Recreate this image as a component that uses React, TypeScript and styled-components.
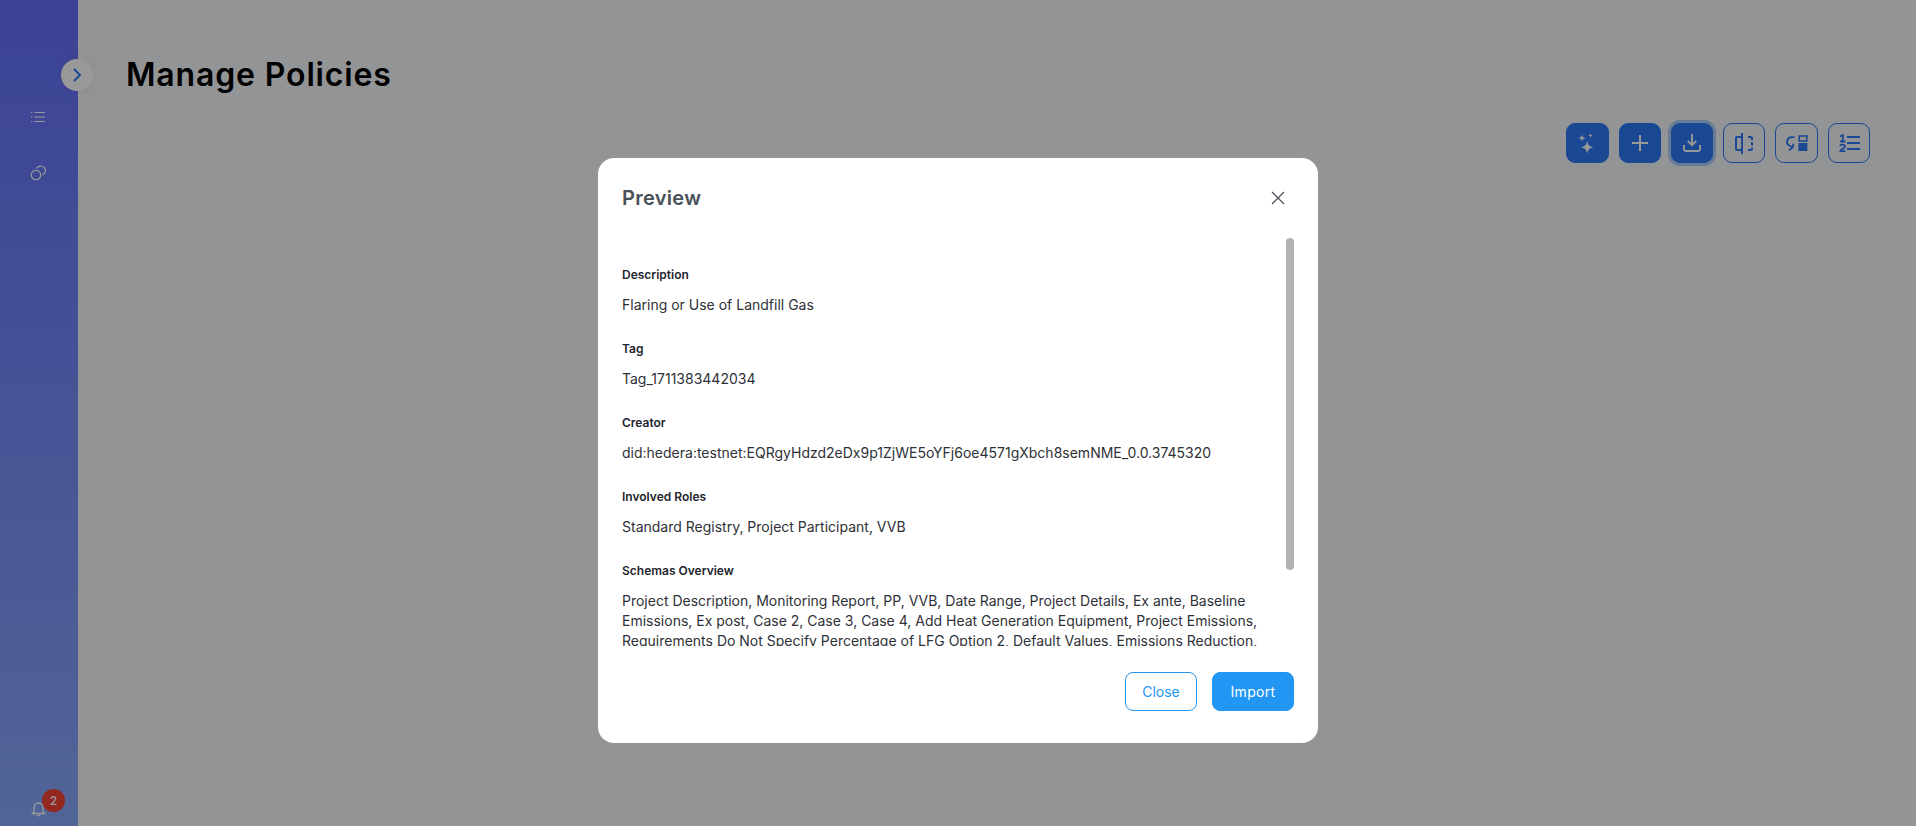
import React from "react";
import styled, { createGlobalStyle } from "styled-components";

const GlobalStyle = createGlobalStyle`
  html, body {
    margin: 0;
    padding: 0;
    height: 100%;
    overflow: hidden;
  }
  body {
    font-family: Inter, "Liberation Sans", sans-serif;
    background: #fff;
  }
`;

const Page = styled.div`
  position: relative;
  display: flex;
  width: 100%;
  height: 826px;
  overflow: hidden;
  background: #f6f7f9;
`;

const Sidebar = styled.nav`
  position: relative;
  display: flex;
  flex-direction: column;
  align-items: center;
  flex: 0 0 78px;
  padding: 106px 0 0;
  box-sizing: border-box;
  background: linear-gradient(180deg, #646ffb 0%, #88a8fb 100%);
  color: #fff;
`;

const NavItem = styled.div`
  display: flex;
  width: 100%;
  height: 22px;
  margin-bottom: 34px;
  align-items: center;
  justify-content: center;
  margin-left: -2px;
`;

const Bell = styled.div`
  position: absolute;
  left: 31px;
  bottom: 9px;
  width: 15px;
  height: 16px;
`;

const Badge = styled.span`
  position: absolute;
  left: 11px;
  top: -12px;
  width: 23px;
  height: 23px;
  border-radius: 50%;
  background: #f44336;
  color: #fff;
  font-size: 12px;
  font-weight: 500;
  line-height: 23px;
  text-align: center;
`;

const Toggle = styled.div`
  position: absolute;
  z-index: 2;
  left: 61px;
  top: 59px;
  display: flex;
  width: 32px;
  height: 32px;
  align-items: center;
  justify-content: center;
  border-radius: 50%;
  background: #fff;
  box-shadow: 0 0 14px rgba(0, 0, 0, 0.06);
`;

const Main = styled.main`
  flex: 1;
  padding: 53px 46px 0 48px;
`;

const Title = styled.h1`
  margin: 0;
  font-size: 32px;
  line-height: 44px;
  font-weight: 600;
  color: #000;
  letter-spacing: 0.85px;
`;

const Toolbar = styled.div`
  display: flex;
  justify-content: flex-end;
  gap: 10px;
  margin-top: 26px;
`;

const ToolButton = styled.button<{ $filled?: boolean; $focused?: boolean; $wide?: boolean }>`
  display: flex;
  width: ${(p) => (p.$wide ? "43px" : "42px")};
  height: 40px;
  padding: 0;
  align-items: center;
  justify-content: center;
  box-sizing: border-box;
  border-radius: 9px;
  border: 1px solid #2c78f6;
  background: ${(p) => (p.$filled ? "#2c78f6" : "transparent")};
  color: ${(p) => (p.$filled ? "#fff" : "#2c78f6")};
  box-shadow: ${(p) => (p.$focused ? "0 0 0 3px #acccfb" : "none")};
`;

const Overlay = styled.div`
  position: absolute;
  z-index: 5;
  inset: 0;
  display: flex;
  justify-content: center;
  align-items: flex-start;
  background: rgba(0, 0, 0, 0.4);
`;

const Modal = styled.div`
  display: flex;
  flex-direction: column;
  width: 720px;
  height: 585px;
  margin-top: 158px;
  box-sizing: border-box;
  border-radius: 16px;
  background: #fff;
`;

const ModalHeader = styled.header`
  display: flex;
  flex: 0 0 auto;
  align-items: center;
  justify-content: space-between;
  height: 80px;
  padding: 0 33px 0 24px;
`;

const ModalTitle = styled.h2`
  margin: 0;
  font-size: 20px;
  font-weight: 600;
  letter-spacing: 0.3px;
  color: #495057;
`;

const CloseIcon = styled.div`
  display: flex;
  color: #495057;
`;

const ModalBody = styled.div`
  position: relative;
  flex: 0 0 408px;
  overflow: hidden;
  padding: 3px 60px 0 24px;
  box-sizing: border-box;
`;

const Scrollbar = styled.div`
  position: absolute;
  top: 0;
  right: 24px;
  width: 8px;
  height: 332px;
  border-radius: 4px;
  background: #b2b2b2;
`;

const Field = styled.section`
  padding-top: 26px;
`;

const Label = styled.div`
  font-size: 12px;
  line-height: 16px;
  font-weight: 600;
  color: #23252e;
  margin-bottom: 12px;
`;

const Value = styled.div`
  font-size: 14px;
  line-height: 20px;
  color: #2f3138;
`;

const ModalFooter = styled.footer`
  display: flex;
  justify-content: flex-end;
  gap: 15px;
  padding: 26px 24px 0;
`;

const FooterButton = styled.button<{ $primary?: boolean }>`
  height: 39px;
  width: ${(p) => (p.$primary ? "82px" : "72px")};
  padding: 0;
  box-sizing: border-box;
  border: 1px solid #2196f3;
  border-radius: 8px;
  font-family: Inter, "Liberation Sans", sans-serif;
  font-size: 14px;
  font-weight: 400;
  letter-spacing: ${(p) => (p.$primary ? "0.3px" : "0")};
  background: ${(p) => (p.$primary ? "#2196f3" : "#fff")};
  color: ${(p) => (p.$primary ? "#fff" : "#2196f3")};
`;

const fields = [
  { label: "Description", value: "Flaring or Use of Landfill Gas" },
  { label: "Tag", value: "Tag_1711383442034" },
  {
    label: "Creator",
    value: "did:hedera:testnet:EQRgyHdzd2eDx9p1ZjWE5oYFj6oe4571gXbch8semNME_0.0.3745320",
  },
  { label: "Involved Roles", value: "Standard Registry, Project Participant, VVB" },
  {
    label: "Schemas Overview",
    value:
      "Project Description, Monitoring Report, PP, VVB, Date Range, Project Details, Ex ante, Baseline Emissions, Ex post, Case 2, Case 3, Case 4, Add Heat Generation Equipment, Project Emissions, Requirements Do Not Specify Percentage of LFG Option 2, Default Values, Emissions Reduction, Leakage Emissions, Monitoring Parameters",
  },
];

function App() {
  return (
    <Page>
      <GlobalStyle />
      <Sidebar>
        <NavItem>
          <svg width="14" height="12" viewBox="0 0 14 12" fill="none" stroke="#fff" strokeWidth="1.2">
            <path d="M3.500 1.500H14M3.500 6H14M3.500 10.500H14" />
            <path d="M0 1.500h1.500M0 6h1.500M0 10.500h1.500" />
          </svg>
        </NavItem>
        <NavItem>
          <svg width="16" height="16" viewBox="0 0 16 16" fill="none" stroke="#fff" strokeWidth="1.2">
            <circle cx="6" cy="10" r="4.700" />
            <path d="M6.500 3.600A4.700 4.700 0 1 1 12.600 10" />
          </svg>
        </NavItem>
        <Bell>
          <svg width="15" height="16" viewBox="0 0 15 16" fill="none" stroke="#fff" strokeWidth="1.3">
            <path d="M3 11V6.500a4.500 4.500 0 0 1 9 0V11l1.500 1.500h-12z" />
            <path d="M5.800 14.600h3.400" />
          </svg>
          <Badge>2</Badge>
        </Bell>
      </Sidebar>
      <Toggle>
        <svg width="10" height="16" viewBox="0 0 10 16" fill="none" stroke="#2c78f6" strokeWidth="2">
          <path d="M2 2l6 6-6 6" />
        </svg>
      </Toggle>
      <Main>
        <Title>Manage Policies</Title>
        <Toolbar>
          <ToolButton $filled $wide>
            <svg width="20" height="20" viewBox="0 0 20 20" fill="#fff">
              <path d="M9.200 7.800c.7 4 2.300 5.800 6.500 6.500-4.200.7-5.800 2.500-6.500 6.500-.7-4-2.300-5.800-6.500-6.500 4.200-.7 5.800-2.500 6.500-6.500z" />
              <path d="M4 1.500c.4 2.200 1.300 3.100 3.500 3.500-2.200.4-3.100 1.300-3.500 3.500C3.600 6.300 2.700 5.400.5 5 2.700 4.600 3.600 3.700 4 1.500z" />
              <path d="M12.500.300c.2 1.300.9 2 2.200 2.200-1.300.2-2 .9-2.200 2.200-.2-1.300-.9-2-2.200-2.200 1.300-.2 2-.9 2.200-2.200z" />
            </svg>
          </ToolButton>
          <ToolButton $filled>
            <svg width="16" height="16" viewBox="0 0 16 16" stroke="#fff" strokeWidth="2" fill="none">
              <path d="M8 0v16M0 8h16" />
            </svg>
          </ToolButton>
          <ToolButton $filled $focused>
            <svg width="18" height="18" viewBox="0 0 18 18" fill="none" stroke="#fff" strokeWidth="1.900">
              <path d="M9 0v11M4.800 7L9 11.200 13.200 7" />
              <path d="M1 11v4.500A1.500 1.500 0 0 0 2.500 17h13a1.500 1.500 0 0 0 1.500-1.500V11" />
            </svg>
          </ToolButton>
          <ToolButton>
            <svg width="18" height="21" viewBox="0 0 18 21" fill="none" stroke="currentColor" strokeWidth="2">
              <path d="M7 4H2a1 1 0 0 0-1 1v11a1 1 0 0 0 1 1h5M7 0v21" />
              <path d="M13 4h2.500A1.500 1.500 0 0 1 17 5.500V7M17 9v3.500M17 14.500V15.500A1.500 1.500 0 0 1 15.500 17H13" />
            </svg>
          </ToolButton>
          <ToolButton $wide>
            <svg width="22" height="16" viewBox="0 0 22 16" fill="none" stroke="currentColor" strokeWidth="1.800">
              <rect x="13.200" y="1" width="7.600" height="5" strokeWidth="1.600" />
              <rect x="12.400" y="8" width="9" height="8" fill="currentColor" stroke="none" />
              <path d="M8.500 2.200H6A4.500 4.500 0 0 0 3.800 10.800L6.500 12.500" />
              <path d="M7.500 8.800L6.500 12.700 3 15.200" />
            </svg>
          </ToolButton>
          <ToolButton>
            <svg width="21" height="18" viewBox="0 0 21 18" fill="none" stroke="currentColor" strokeWidth="1.800">
              <path d="M8 3h13M8 9h13M8 15h13" />
              <path d="M1 2.500L3.800 1v6.500M1 7.500h5.500" />
              <path d="M1 12c.5-1.800 5-1.800 5 .6 0 1.800-4.300 2.500-4.700 4.500h5.200" />
            </svg>
          </ToolButton>
        </Toolbar>
      </Main>
      <Overlay>
        <Modal>
          <ModalHeader>
            <ModalTitle>Preview</ModalTitle>
            <CloseIcon>
              <svg width="14" height="14" viewBox="0 0 14 14" fill="none" stroke="currentColor" strokeWidth="1.200">
                <path d="M1 1l12 12M13 1L1 13" />
              </svg>
            </CloseIcon>
          </ModalHeader>
          <ModalBody>
            <Scrollbar />
            {fields.map((f) => (
              <Field key={f.label}>
                <Label>{f.label}</Label>
                <Value>{f.value}</Value>
              </Field>
            ))}
          </ModalBody>
          <ModalFooter>
            <FooterButton>Close</FooterButton>
            <FooterButton $primary>Import</FooterButton>
          </ModalFooter>
        </Modal>
      </Overlay>
    </Page>
  );
}

export default App;
